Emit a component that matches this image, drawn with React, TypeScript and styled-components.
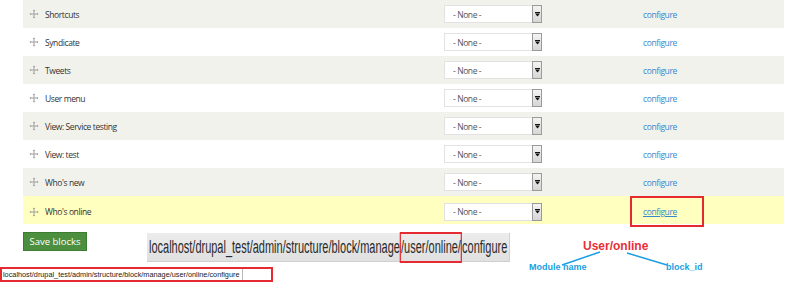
import React from "react";
import styled, { createGlobalStyle } from "styled-components";

const GlobalStyle = createGlobalStyle`
  html, body {
    margin: 0;
    padding: 0;
    background: #ffffff;
    width: 800px;
    height: 284px;
    overflow: hidden;
  }
  body {
    font-family: "Open Sans", "Liberation Sans", sans-serif;
  }
`;

const Page = styled.div`
  display: flex;
  flex-direction: column;
`;

const BlockTable = styled.div`
  margin-left: 23px;
  width: 761px;
  display: flex;
  flex-direction: column;
`;

const Row = styled.div<{ $tone: "odd" | "even" | "hit" }>`
  display: grid;
  grid-template-columns: 421px 199px 1fr;
  align-items: center;
  height: 28px;
  background: ${(p) =>
    p.$tone === "hit" ? "#ffffbf" : p.$tone === "odd" ? "#f2f2ed" : "#ffffff"};
`;

const LabelCell = styled.div`
  display: flex;
  align-items: center;
  gap: 6px;
  padding-left: 6px;
  font-size: 8.5px;
  letter-spacing: -0.4px;
  color: #333333;
`;

const Select = styled.div`
  position: relative;
  display: flex;
  align-items: center;
  width: 98px;
  height: 18px;
  box-sizing: border-box;
  background: #ffffff;
  border: 1px solid #e2e2e2;
  border-right: none;
  font-size: 8.5px;
  letter-spacing: -0.4px;
  color: #555555;
  padding-left: 8px;
`;

const SelectArrow = styled.span`
  position: absolute;
  right: 0;
  top: -1px;
  bottom: -1px;
  width: 10px;
  box-sizing: border-box;
  border: 1px solid #9a9a9a;
  background: linear-gradient(#f4f4f4, #d6d6d6);
  display: flex;
  align-items: center;
  justify-content: center;
`;

const ConfigCell = styled.div`
  display: flex;
  align-items: center;
`;

const ConfigLink = styled.a<{ $underline?: boolean }>`
  font-size: 8.5px;
  letter-spacing: -0.4px;
  color: #3389cc;
  text-decoration: ${(p) => (p.$underline ? "underline" : "none")};
  cursor: pointer;
`;

const MarkBox = styled.span`
  display: flex;
  align-items: center;
  box-sizing: border-box;
  height: 31px;
  margin-left: -13px;
  padding: 0 25px 0 11px;
  border: 2px solid #e52a32;
`;

const Footer = styled.div`
  display: flex;
  align-items: flex-start;
  margin-top: 8px;
  padding-left: 23px;
  height: 30px;
`;

const SaveButton = styled.button`
  height: 19px;
  width: 64px;
  padding: 0;
  border: 1px solid #3f7c33;
  background: #4c8f3e;
  color: #ffffff;
  font-family: "Open Sans", "Liberation Sans", sans-serif;
  font-size: 9.5px;
  cursor: pointer;
`;

const UrlShot = styled.div`
  margin-left: 60px;
  margin-top: 1px;
  width: 363px;
  height: 29px;
  box-sizing: border-box;
  background: linear-gradient(#ececec, #e0e0e0);
  border-right: 1px solid #d0d0d0;
  border-bottom: 1px solid #cfcfcf;
  display: flex;
  align-items: center;
  padding-left: 2px;
`;

const UrlText = styled.span`
  display: inline-block;
  white-space: nowrap;
  font-family: "Liberation Sans", sans-serif;
  font-size: 18px;
  line-height: 20px;
  color: #2a2a2a;
  transform: scaleX(0.61);
  transform-origin: left center;
`;

const UrlMark = styled.span`
  border: 2px solid #e52a32;
  padding: 3px 0 4px;
`;

const Annotation = styled.div`
  position: relative;
  margin-left: 10px;
  width: 200px;
  height: 30px;
`;

const Note = styled.span<{ $x: number; $y: number; $size: number; $color: string }>`
  position: absolute;
  left: ${(p) => p.$x}px;
  top: ${(p) => p.$y}px;
  font-family: "Liberation Sans", sans-serif;
  font-weight: 700;
  font-size: ${(p) => p.$size}px;
  line-height: 1;
  color: ${(p) => p.$color};
  white-space: nowrap;
`;

const Leaders = styled.svg`
  position: absolute;
  left: 0;
  top: 0;
  overflow: visible;
`;

const StatusBar = styled.div`
  margin-top: 5px;
  width: 273px;
  height: 15px;
  box-sizing: border-box;
  border: 2px solid #e52a32;
  display: flex;
  align-items: center;
`;

const StatusText = styled.span`
  font-family: "Liberation Sans", sans-serif;
  font-size: 7.3px;
  color: #222222;
  padding: 0 3px 0 1px;
  height: 100%;
  display: flex;
  align-items: center;
  border-right: 1px solid #b8b8b8;
  white-space: nowrap;
`;

const DragHandle = () => (
  <svg width="10" height="10" viewBox="0 0 10 10" fill="none">
    <path d="M5 1v8M1 5h8" stroke="#a0a0a0" strokeWidth="1" />
    <path d="M5 0.5 6.3 2H3.7z M5 9.5 6.3 8H3.7z M0.5 5 2 3.7v2.6z M9.5 5 8 3.7v2.6z" fill="#a0a0a0" />
  </svg>
);

const ArrowGlyph = () => (
  <svg width="5" height="5" viewBox="0 0 5 5">
    <rect x="0" y="0" width="5" height="1" fill="#111" />
    <path d="M0 1.6h5L2.5 4.6z" fill="#111" />
  </svg>
);

const blocks = [
  "Shortcuts",
  "Syndicate",
  "Tweets",
  "User menu",
  "View: Service testing",
  "View: test",
  "Who's new",
  "Who's online",
];

const url = "localhost/drupal_test/admin/structure/block/manage/user/online/configure";

export default function App() {
  return (
    <Page>
      <GlobalStyle />
      <BlockTable>
        {blocks.map((name, i) => {
          const hit = i === blocks.length - 1;
          return (
            <Row key={name} $tone={hit ? "hit" : i % 2 === 0 ? "odd" : "even"}>
              <LabelCell>
                <DragHandle />
                {name}
              </LabelCell>
              <div>
                <Select>
                  - None -
                  <SelectArrow>
                    <ArrowGlyph />
                  </SelectArrow>
                </Select>
              </div>
              <ConfigCell>
                {hit ? (
                  <MarkBox>
                    <ConfigLink $underline>configure</ConfigLink>
                  </MarkBox>
                ) : (
                  <ConfigLink>configure</ConfigLink>
                )}
              </ConfigCell>
            </Row>
          );
        })}
      </BlockTable>

      <Footer>
        <SaveButton>Save blocks</SaveButton>
        <UrlShot>
          <UrlText>
            localhost/drupal_test/admin/structure/block/manage
            <UrlMark>/user/online/</UrlMark>
            configure
          </UrlText>
        </UrlShot>
        <Annotation>
          <Leaders width="200" height="40">
            <line x1="42" y1="33" x2="80" y2="20" stroke="#1a9fe2" strokeWidth="1.5" />
            <line x1="107" y1="21" x2="147" y2="33" stroke="#1a9fe2" strokeWidth="1.5" />
          </Leaders>
          <Note $x={63} $y={8} $size={12} $color="#e8303a">
            User/online
          </Note>
          <Note $x={9} $y={31} $size={9} $color="#1a9fe2">
            Module name
          </Note>
          <Note $x={146} $y={31} $size={9} $color="#1a9fe2">
            block_id
          </Note>
        </Annotation>
      </Footer>

      <StatusBar>
        <StatusText>{url}</StatusText>
      </StatusBar>
    </Page>
  );
}
